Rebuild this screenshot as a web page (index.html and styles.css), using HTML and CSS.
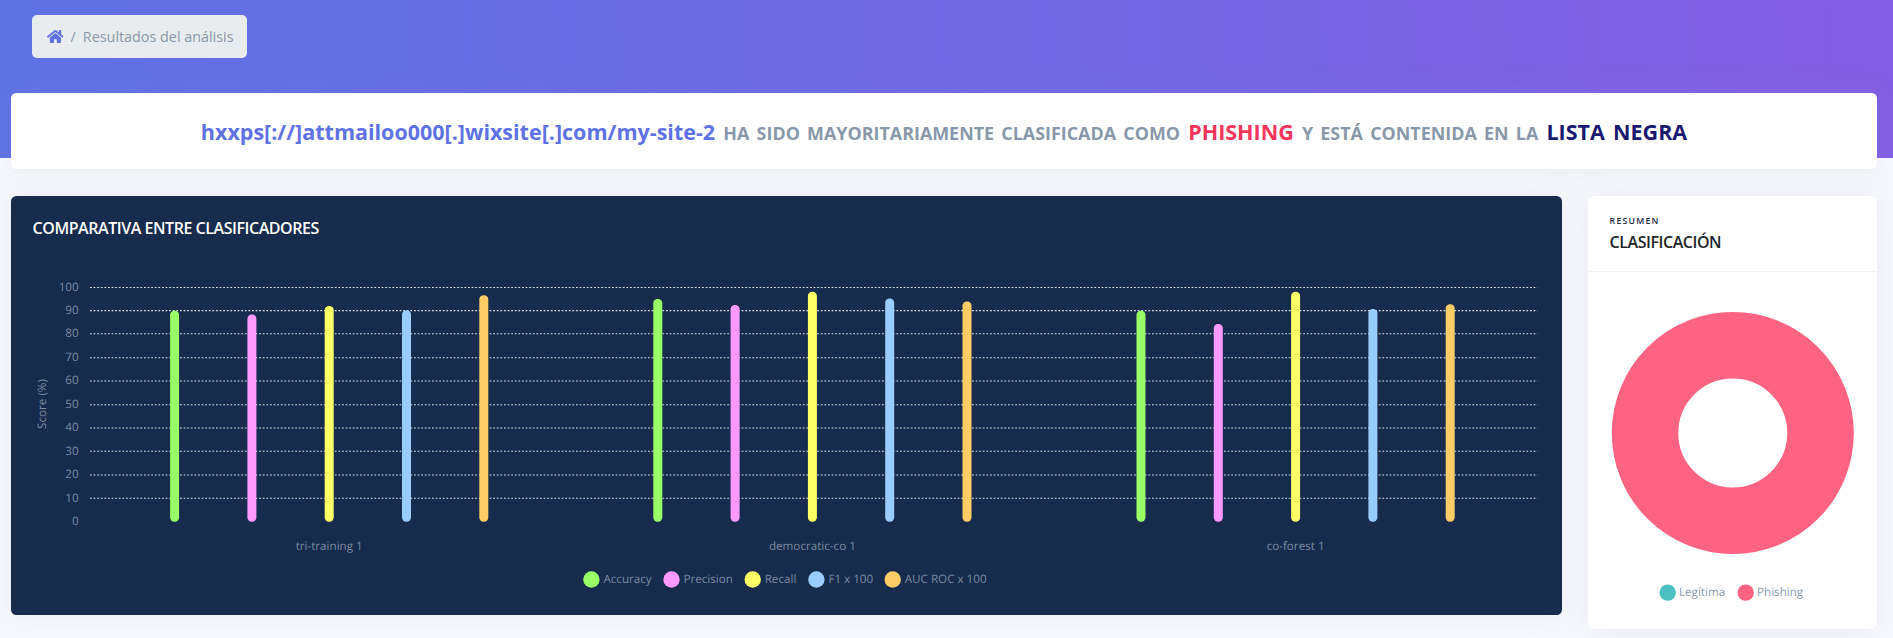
FILE: index.html
```html
<!DOCTYPE html>
<html lang="es">
<head>
<meta charset="utf-8">
<title>Resultados del análisis</title>
<link rel="stylesheet" href="styles.css">
</head>
<body>
<header class="header">
  <nav class="breadcrumb">
    <svg class="home" viewBox="0 0 576 512"><path d="M280.37 148.26L96 300.11V464a16 16 0 0 0 16 16l112.06-.29a16 16 0 0 0 15.92-16V368a16 16 0 0 1 16-16h64a16 16 0 0 1 16 16v95.64a16 16 0 0 0 16 16.05L464 480a16 16 0 0 0 16-16V300L295.67 148.26a12.19 12.19 0 0 0-15.3 0zM571.6 251.47L488 182.56V44.05a12 12 0 0 0-12-12h-56a12 12 0 0 0-12 12v72.61L318.47 43a48 48 0 0 0-61 0L4.34 251.47a12 12 0 0 0-1.6 16.9l25.5 31A12 12 0 0 0 45.15 301l235.22-193.74a12.19 12.19 0 0 1 15.3 0L530.9 301a12 12 0 0 0 16.9-1.6l25.5-31a12 12 0 0 0-1.7-16.93z"/></svg>
    <span class="sep">/</span>
    <span>Resultados del análisis</span>
  </nav>
</header>
<main class="content">
  <section class="card verdict">
    <h1><span class="url">hxxps[://]attmailoo000[.]wixsite[.]com/my-site-2</span> <span class="minor">HA SIDO MAYORITARIAMENTE CLASIFICADA COMO</span> <span class="danger">PHISHING</span> <span class="minor">Y ESTÁ CONTENIDA EN LA</span> <span class="list">LISTA NEGRA</span></h1>
  </section>
  <div class="row">
    <section class="card dark">
      <div class="head"><h2>COMPARATIVA ENTRE CLASIFICADORES</h2></div>
      <svg class="chart" id="bars" viewBox="11 259 1551 356"></svg>
    </section>
    <section class="card summary">
      <div class="head"><h6>RESUMEN</h6><h2>CLASIFICACIÓN</h2></div>
      <svg class="chart" viewBox="1588 272 289 357">
        <circle cx="1732.8" cy="433" r="87.75" fill="none" stroke="#ff6384" stroke-width="66.5"/>
        <circle cx="1667.7" cy="592.6" r="8.2" fill="#4bc0c0"/><text x="1679" y="596">Legítima</text>
        <circle cx="1745.7" cy="592.6" r="8.2" fill="#ff6384"/><text x="1757" y="596">Phishing</text>
      </svg>
    </section>
  </div>
</main>
<script src="chart.js"></script>
</body>
</html>
```
FILE: styles.css
```css
* { box-sizing: border-box; }
body {
  margin: 0;
  height: 638px;
  overflow: hidden;
  background: #f8f9fe;
  color: #32325d;
  font-family: "Open Sans", sans-serif;
}
h1, h2, h6 { margin: 0; }
.header {
  height: 158px;
  padding: 15px 32px;
  background: linear-gradient(87deg, #5e72e4 0, #825ee4 100%);
}
.breadcrumb {
  display: inline-flex;
  align-items: center;
  width: 215px;
  height: 43px;
  padding: 0 10px 0 14.6px;
  border-radius: 5px;
  background: #e9ecef;
  color: #8898aa;
  font-size: 14.35px;
  white-space: nowrap;
}
.home { flex: none; width: 16.8px; height: 15px; fill: #5e72e4; }
.sep { padding: 0 7.2px 0 7px; }
.content { margin: -65px 16px 0 11px; }
.card {
  position: relative;
  border-radius: 5.4px;
  background: #fff;
  box-shadow: 0 0 28.8px 0 rgba(136, 152, 170, .15);
}
.verdict {
  display: flex;
  align-items: center;
  justify-content: center;
  height: 76px;
  margin-bottom: 27px;
}
h1 {
  padding-top: 2px;
  color: #8898aa;
  font-size: 21.5px;
  font-weight: 700;
  line-height: 34px;
  word-spacing: 2.6px;
  white-space: nowrap;
}
.minor { font-size: 17.9px; }
.url { color: #5e72e4; }
.danger { color: #f5365c; }
.list { color: #191970; }
.row { display: grid; grid-template-columns: 1551px 289px; gap: 26px; align-items: start; }
.dark { height: 419px; background: #172b4d; }
.summary { height: 433px; }
.head { padding: 18px 21.6px; border-bottom: 1px solid rgba(0, 0, 0, .05); }
.dark .head { height: 63px; }
.summary .head { height: 76px; }
h2 { padding-top: 1px; color: #212529; font-size: 16px; font-weight: 600; line-height: 27px; letter-spacing: -.45px; }
.dark h2 { color: #fff; }
h6 { color: #252a45; font-size: 8.7px; font-weight: 600; line-height: 14px; letter-spacing: 1.25px; }
.chart { display: block; width: 100%; }
.chart text { fill: #8898aa; font-size: 11.65px; text-rendering: geometricPrecision; }
.dark text { fill-opacity: .92; }
.grid { stroke: #dee2e6; stroke-width: 1.1; stroke-dasharray: 1.8 1.8; }
```
FILE: chart.js
```js
const svg = document.getElementById('bars');
const NS = 'http://www.w3.org/2000/svg';
function add(name, attrs, text) {
  const el = document.createElementNS(NS, name);
  for (const key in attrs) el.setAttribute(key, attrs[key]);
  if (text !== undefined) el.textContent = text;
  svg.appendChild(el);
}
const colors = ['#99ff66', '#ff99ff', '#ffff66', '#99ccff', '#ffcc66'];
const groups = [
  ['tri-training 1', 329.2, [310.7, 314.5, 306, 310.3, 295.2]],
  ['democratic-co 1', 812.4, [299, 305, 291.7, 298.5, 301.4]],
  ['co-forest 1', 1295.6, [310.7, 324, 291.7, 309, 304.2]]
];
const ticks = [521.6, 498.2, 475, 451.2, 428, 404.8, 381, 357.8, 333.8, 310.6, 287.5];
ticks.forEach((y, i) => {
  if (i) add('line', { class: 'grid', x1: 90, x2: 1537.5, y1: y, y2: y });
  add('text', { x: 78.6, y: y + 3.3, 'text-anchor': 'end' }, i * 10);
});
for (const [name, cx, tops] of groups) {
  tops.forEach((top, i) => add('rect', { x: cx + (i - 2) * 77.3 - 4.5, y: top, width: 9, height: 521.8 - top, rx: 4.2, fill: colors[i] }));
  add('text', { x: cx, y: 550, 'text-anchor': 'middle' }, name);
}
add('text', { transform: 'translate(46 404) rotate(-90)', 'text-anchor': 'middle' }, 'Score (%)');
[['Accuracy', 591.4], ['Precision', 671.5], ['Recall', 752.7], ['F1 x 100', 816.4], ['AUC ROC x 100', 892.7]].forEach(([name, x], i) => {
  add('circle', { cx: x, cy: 579.5, r: 8.2, fill: colors[i] });
  add('text', { x: x + 12, y: 583 }, name);
});
```
